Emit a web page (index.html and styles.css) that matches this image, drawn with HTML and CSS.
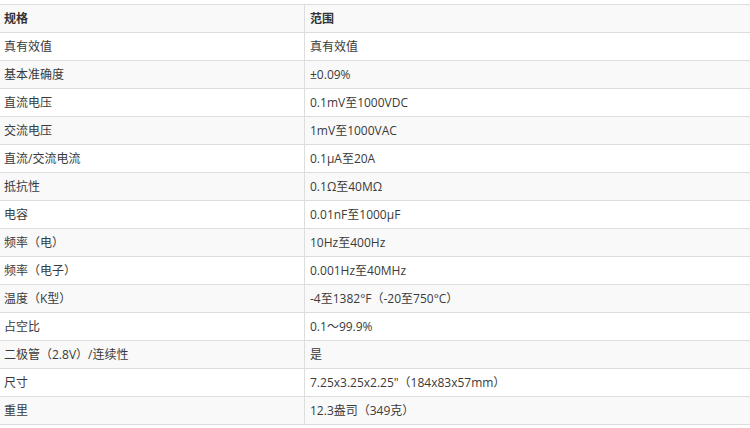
FILE: index.html
```html
<!DOCTYPE html>
<html lang="zh">
<head>
<meta charset="utf-8">
<link rel="stylesheet" href="styles.css">
</head>
<body>
<table class="spec">
  <tr><th class="c1">规格</th><th>范围</th></tr>
  <tr><td class="c1">真有效值</td><td>真有效值</td></tr>
  <tr><td class="c1">基本准确度</td><td>±0.09%</td></tr>
  <tr><td class="c1">直流电压</td><td>0.1mV至1000VDC</td></tr>
  <tr><td class="c1">交流电压</td><td>1mV至1000VAC</td></tr>
  <tr><td class="c1">直流/交流电流</td><td>0.1μA至20A</td></tr>
  <tr><td class="c1">抵抗性</td><td>0.1Ω至40MΩ</td></tr>
  <tr><td class="c1">电容</td><td>0.01nF至1000μF</td></tr>
  <tr><td class="c1">频率（电）</td><td>10Hz至400Hz</td></tr>
  <tr><td class="c1">频率（电子）</td><td>0.001Hz至40MHz</td></tr>
  <tr><td class="c1">温度（K型）</td><td>-4至1382°F（-20至750°C）</td></tr>
  <tr><td class="c1">占空比</td><td>0.1～99.9%</td></tr>
  <tr><td class="c1">二极管（2.8V）/连续性</td><td>是</td></tr>
  <tr><td class="c1">尺寸</td><td>7.25x3.25x2.25"（184x83x57mm）</td></tr>
  <tr><td class="c1">重里</td><td>12.3盎司（349克）</td></tr>
</table>
</body>
</html>
```
FILE: styles.css
```css
html, body {
  margin: 0;
  padding: 0;
  background: #fff;
}
body {
  padding-top: 4px;
  font-family: "Open Sans", "Noto Sans CJK SC", sans-serif;
  font-size: 12px;
  color: #3a3a3a;
}
.spec {
  width: 750px;
  border-collapse: collapse;
  table-layout: fixed;
}
.spec tr:nth-child(odd) {
  background: #f9f9f9;
}
.spec th,
.spec td {
  height: 27px;
  padding: 0 4px 0 5px;
  border-top: 1px solid #dddddd;
  border-bottom: 1px solid #dddddd;
  text-align: left;
  vertical-align: middle;
  white-space: nowrap;
  line-height: 16px;
}
.spec th {
  font-weight: bold;
  color: #333;
}
.spec .c1 {
  width: 296px;
  padding-left: 4px;
  border-right: 1px solid #dddddd;
}
```
